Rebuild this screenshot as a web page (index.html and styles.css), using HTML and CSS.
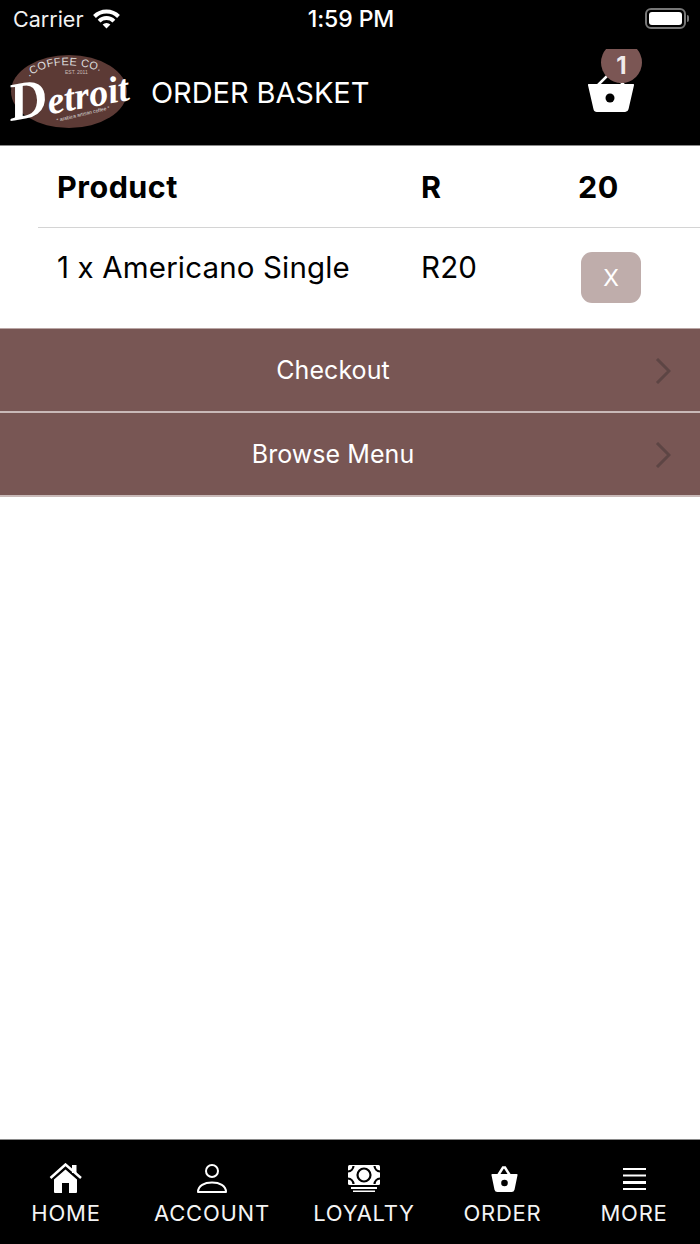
FILE: index.html
```html
<!DOCTYPE html>
<html lang="en">
<head>
<meta charset="utf-8">
<title>Order Basket</title>
<link rel="stylesheet" href="styles.css">
</head>
<body>
<div class="app">
  <header class="header">
    <div class="status">
      <div class="status-left">
        <span>Carrier</span>
        <svg class="wifi" viewBox="0 0 27 20"><path class="wifi-arc" d="M1.500 7.500A17 17 0 0 1 25.500 7.500"/><path class="wifi-arc" d="M6.100 12.100A10.500 10.500 0 0 1 20.900 12.100"/><path d="M13.500 19.500 9.600 15.600A5.500 5.500 0 0 1 17.400 15.600z"/></svg>
      </div>
      <span class="status-time">1:59 PM</span>
      <div class="battery"><span class="battery-body"><span class="battery-fill"></span></span><span class="battery-tip"></span></div>
    </div>
    <div class="titlebar">
      <svg class="logo" viewBox="0 0 124 76">
        <defs><path id="arc" d="M21 23Q50 1 100 20"/></defs>
        <ellipse class="logo-oval" cx="61" cy="37.500" rx="58" ry="36.500"/>
        <text class="logo-top"><textPath href="#arc">.COFFEE CO.</textPath></text>
        <text class="logo-est" x="57" y="20">EST. 2011</text>
        <text class="logo-word" x="3" y="67" transform="rotate(-10 3 67)"><tspan class="logo-d">D</tspan>etroit</text>
        <text class="logo-sub" x="49" y="68" transform="rotate(-13.500 49 68)">* arabica artisan coffee *</text>
      </svg>
      <h1 class="title">ORDER BASKET</h1>
      <div class="cart">
        <svg class="cart-icon" viewBox="0 0 48 40"><path class="basket-handle" d="M11 12 21 2h6l10 10"/><path d="M2 11h44a1 1 0 0 1 1 1.300l-5.500 24A3.500 3.500 0 0 1 38 39H10a3.500 3.500 0 0 1-3.500-2.700L1 12.300A1 1 0 0 1 2 11z"/><circle class="basket-hole" cx="23" cy="25" r="4.500"/></svg>
        <span class="badge">1</span>
      </div>
    </div>
  </header>

  <main class="content">
    <section class="basket">
      <div class="row row-head">
        <span>Product</span>
        <span>R</span>
        <span>20</span>
      </div>
      <div class="row row-item">
        <span>1 x Americano Single</span>
        <span>R20</span>
        <button class="remove" type="button">X</button>
      </div>
    </section>
    <nav class="actions">
      <a class="action"><span class="action-label">Checkout</span><svg class="chevron" viewBox="0 0 16 26"><path d="M2 1l12 12L2 25"/></svg></a>
      <a class="action"><span class="action-label">Browse Menu</span><svg class="chevron" viewBox="0 0 16 26"><path d="M2 1l12 12L2 25"/></svg></a>
    </nav>
  </main>

  <footer class="tabbar">
    <div class="tab">
      <svg class="tab-icon" viewBox="0 0 34 30"><path class="roof" d="M1.500 15 16.500 1.500 32 15"/><path d="M23 2h4.500v8H23z"/><path d="M5 16.500 16.500 6.500 28 16.500V29a1 1 0 0 1-1 1h-7V20h-7v10H6a1 1 0 0 1-1-1z"/></svg>
      <span>HOME</span>
    </div>
    <div class="tab">
      <svg class="tab-icon" viewBox="0 0 34 30"><g class="line"><circle cx="17" cy="8" r="6"/><path d="M3 29C3 22.500 9.500 19.500 17 19.500S31 22.500 31 29z" stroke-linejoin="round"/></g></svg>
      <span>ACCOUNT</span>
    </div>
    <div class="tab">
      <svg class="tab-icon" viewBox="0 0 34 30"><rect x="1" y="2" width="32" height="20" rx="1.500"/><g class="cut"><path d="M1 8.500a6 6 0 0 0 5.500-5.500"/><path d="M33 8.500a6 6 0 0 1-5.500-5.500"/><path d="M1 15.500a6 6 0 0 1 5.500 5.500"/><path d="M33 15.500a6 6 0 0 0-5.500 5.500"/><circle cx="17" cy="12" r="6.500"/></g><path d="M4 24h26v2H4zM6 27.500h22V29H6z"/></svg>
      <span>LOYALTY</span>
    </div>
    <div class="tab">
      <svg class="tab-icon" viewBox="0 0 34 30"><path class="basket-handle" d="M12 12.500 17 4.500h2l5 8"/><path d="M6.500 11h24a1 1 0 0 1 1 1.300l-3 14.500A3 3 0 0 1 25.500 29h-14a3 3 0 0 1-3-2.200l-3-14.500a1 1 0 0 1 1-1.300z"/><circle class="basket-hole" cx="18.500" cy="20" r="3.300"/></svg>
      <span>ORDER</span>
    </div>
    <div class="tab">
      <svg class="tab-icon" viewBox="0 0 34 30"><path d="M6 5h23v2H6zM6 11.500h23v2H6zM6 18h23v3H6zM6 25h23v2H6z"/></svg>
      <span>MORE</span>
    </div>
  </footer>
</div>
</body>
</html>
```
FILE: styles.css
```css
* { box-sizing: border-box; }

html, body { margin: 0; padding: 0; }

body {
  background: #fff;
  font-family: Inter, "Liberation Sans", sans-serif;
  color: #000;
}

.app {
  width: 700px;
  height: 1244px;
  display: flex;
  flex-direction: column;
  overflow: hidden;
}

.header {
  height: 146px;
  background: #000;
  color: #fff;
  border-bottom: 1px solid #8a8a8a;
  flex: none;
}

.status {
  height: 40px;
  padding: 0 11px 2px 13px;
  display: grid;
  grid-template-columns: 1fr auto 1fr;
  align-items: center;
  font-size: 21.500px;
  font-weight: 400;
}

.status-left {
  display: flex;
  align-items: center;
  gap: 10px;
  color: #f2f2f2;
}

.wifi { width: 27px; height: 20px; fill: #fff; }
.wifi-arc { fill: none; stroke: #fff; stroke-width: 4; }

.status-time { font-weight: 500; font-size: 23px; letter-spacing: -.1px; }

.battery {
  justify-self: end;
  display: flex;
  align-items: center;
  gap: 1px;
  margin-top: -2px;
}

.battery-body {
  width: 41px;
  height: 21px;
  border: 2px solid #777;
  border-radius: 6px;
  padding: 2px;
  display: block;
}

.battery-fill {
  display: block;
  width: 100%;
  height: 100%;
  background: #fff;
  border-radius: 3px;
}

.battery-tip {
  width: 2px;
  height: 7px;
  background: #777;
  border-radius: 0 2px 2px 0;
}

.titlebar {
  height: 105px;
  display: flex;
  align-items: center;
  padding-left: 8px;
}

.logo { width: 124px; height: 76px; flex: none; margin-top: -2px; overflow: visible; }

.logo-oval { fill: #5c3a35; }
.logo-top { font: 400 11px "Liberation Sans", sans-serif; fill: #ddd; letter-spacing: .4px; }
.logo-est { font: 400 5px "Liberation Sans", sans-serif; fill: #c9bcb8; }
.logo-word { font: italic 700 38px "Liberation Serif", serif; fill: #fff; }
.logo-d { font-size: 54px; }
.logo-sub { font: 400 5px "Liberation Sans", sans-serif; fill: #ddd; }

.title {
  margin: 0 0 0 19px;
  font-size: 29px;
  font-weight: 400;
  letter-spacing: -.08px;
  white-space: nowrap;
}

.cart {
  position: relative;
  margin-left: auto;
  margin-right: 65px;
  width: 48px;
  height: 40px;
  margin-top: 1px;
}

.cart-icon { display: block; width: 48px; height: 40px; fill: #fff; }

.basket-handle { fill: none; stroke: #fff; stroke-width: 2.500; }
.basket-hole { fill: #000; }

.badge {
  position: absolute;
  left: 14px;
  top: -31px;
  width: 41px;
  height: 41px;
  padding-top: 5px;
  border-radius: 50%;
  clip-path: inset(7px 0 0 0);
  background: #7b5654;
  font-size: 24px;
  font-weight: 700;
  color: #f0eaea;
  display: flex;
  align-items: center;
  justify-content: center;
}

.content { flex: 1; background: #fff; }

.basket { margin-left: 38px; }

.row {
  display: grid;
  grid-template-columns: 364px 157px auto;
  padding-left: 19px;
  font-size: 29.500px;
}

.row-head {
  height: 82px;
  align-items: center;
  font-size: 30.500px;
  font-weight: 700;
  letter-spacing: .5px;
  border-bottom: 1px solid #d4d4d4;
  padding-bottom: 1px;
}

.row-item {
  height: 100px;
  padding-top: 21px;
  align-items: start;
  line-height: 36px;
  letter-spacing: .15px;
}

.remove {
  width: 60px;
  height: 51px;
  margin: 3px 0 0 3px;
  padding: 0;
  border: 0;
  border-radius: 11px;
  background: #bfadab;
  color: #fff;
  font: 400 23px Inter, sans-serif;
}

.actions { border-top: 1px solid #b9a5a4; }

.action {
  position: relative;
  height: 84px;
  display: flex;
  align-items: center;
  justify-content: center;
  padding-right: 34px;
  background: #785654;
  color: #fff;
  font-size: 25px;
  letter-spacing: .06px;
  border-bottom: 2px solid #c9b9b8;
}

.chevron {
  position: absolute;
  right: 29px;
  top: 29px;
  width: 16px;
  height: 26px;
  fill: none;
  stroke: #5d4544;
  stroke-width: 3;
}

.tabbar {
  height: 105px;
  flex: none;
  background: #000;
  color: #f4f4f4;
  border-top: 1px solid #8a8a8a;
  display: grid;
  grid-template-columns: 132px 160px 144px 133px 130px;
  padding-top: 23px;
}

.tab {
  display: flex;
  flex-direction: column;
  align-items: center;
  gap: 7px;
  font-size: 22px;
  letter-spacing: .75px;
  line-height: 27px;
}

.tab-icon { width: 34px; height: 30px; fill: #fff; display: block; }

.line { fill: none; stroke: #fff; stroke-width: 2; }
.roof { fill: none; stroke: #fff; stroke-width: 2.500; }
.cut { fill: none; stroke: #000; stroke-width: 2.200; }
```
